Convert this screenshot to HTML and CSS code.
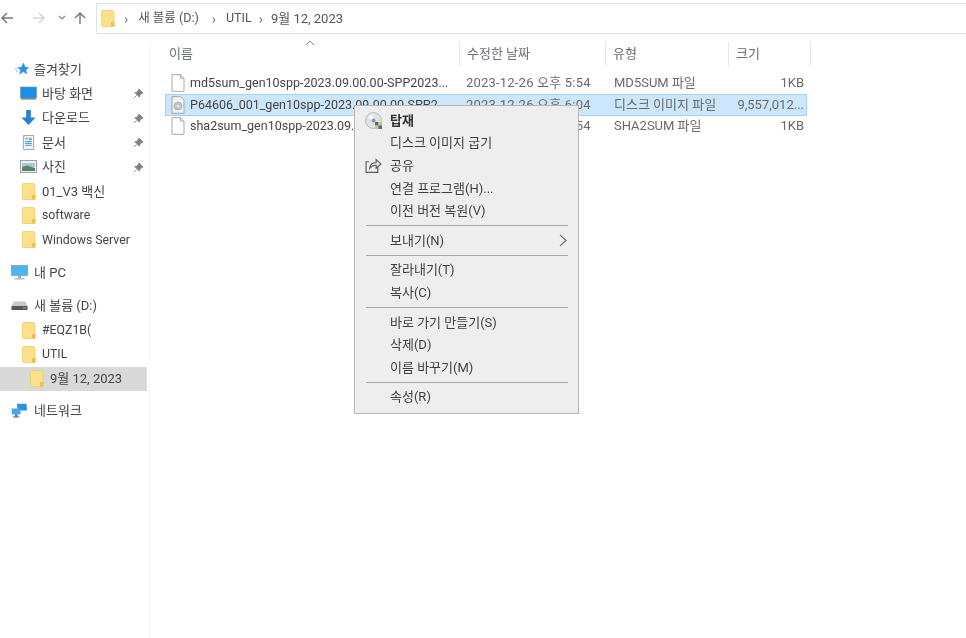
FILE: index.html
```html
<!DOCTYPE html>
<html lang="ko">
<head>
<meta charset="utf-8">
<title>9월 12, 2023</title>
<link rel="stylesheet" href="styles.css">
</head>
<body>
<svg class="defs" width="0" height="0" aria-hidden="true">
  <defs>
    <symbol id="folder" viewBox="0 0 14 17">
      <path d="M0.5 1.5 Q0.5 0.5 1.5 0.5 H11 Q13 0.5 13 2.5 V16.5 H1.5 Q0.5 16.5 0.5 15.5Z" fill="#fde08a" stroke="#eccb6b" stroke-width="0.8"/>
      <path d="M10 16.5 V12 H13.5 V16.5Z" fill="#eec14e"/>
    </symbol>
    <symbol id="pin" viewBox="0 0 12 12">
      <path d="M6.5 1 L11 5.5 L9.6 6 L7.4 8.2 L7 10 L2 5 L3.8 4.6 L6 2.4Z M4 8 L1 11" fill="#7d8288" stroke="#7d8288" stroke-width="0.9"/>
    </symbol>
    <symbol id="file" viewBox="0 0 14 18">
      <path d="M1 .7 H9.5 L13 4.2 V17.3 H1Z" fill="#fff" stroke="#a9a9a9" stroke-width="1"/>
      <path d="M9.5 .7 V4.2 H13" fill="#f1f1f1" stroke="#a9a9a9" stroke-width="1"/>
    </symbol>
  </defs>
</svg>
<div class="app">
  <header class="toolbar">
    <div class="nav">
      <svg class="nav-ico" width="14" height="14" viewBox="0 0 14 14"><path d="M13 7H2M7 2 2 7l5 5" fill="none" stroke="#7b7b7b" stroke-width="1.5"/></svg>
      <svg class="nav-ico" width="14" height="14" viewBox="0 0 14 14"><path d="M1 7h11M7 2l5 5-5 5" fill="none" stroke="#d5d5d5" stroke-width="1.5"/></svg>
      <svg class="nav-ico" width="8" height="6" viewBox="0 0 8 6"><path d="M1 1l3 3 3-3" fill="none" stroke="#8a8a8a" stroke-width="1.2"/></svg>
      <svg class="nav-ico" width="14" height="14" viewBox="0 0 14 14"><path d="M7 13V2M2 7l5-5 5 5" fill="none" stroke="#7b7b7b" stroke-width="1.5"/></svg>
    </div>
    <div class="address">
      <svg class="addr-folder"><use href="#folder"/></svg>
      <span class="chev">›</span><span>새 볼륨 (D:)</span>
      <span class="chev">›</span><span>UTIL</span>
      <span class="chev chev-last">›</span><span class="crumb-last">9월 12, 2023</span>
    </div>
  </header>

  <div class="main">
    <nav class="sidebar">
      <div class="item head first">
        <svg class="ico-s" viewBox="0 0 14 14"><path d="M8.5 1 10 5.2l3.6.2-2.8 2.500 1 3.900L8.300 9.600 4.700 12l1-3.900-3-2.500 3.800-.3z M1 9h2M0 6.500h2" fill="#2f8fe0" stroke="#2f8fe0" stroke-width=".6"/></svg>
        <span>즐겨찾기</span>
      </div>
      <div class="item sub">
        <svg class="ico-b" viewBox="0 0 17 14"><rect x=".5" y=".5" width="16" height="11" fill="#1a90e8" stroke="#6f8fa8" stroke-width=".6"/><rect x="1" y="11.6" width="15" height="1.5" fill="#74808a"/></svg>
        <span>바탕 화면</span>
        <svg class="pin"><use href="#pin"/></svg>
      </div>
      <div class="item sub">
        <svg class="ico-b" viewBox="0 0 17 16"><path d="M6 0h5v8h5l-7.500 8L1 8h5z" fill="#2d7fd3"/></svg>
        <span>다운로드</span>
        <svg class="pin"><use href="#pin"/></svg>
      </div>
      <div class="item sub">
        <svg class="ico-b" viewBox="0 0 17 16"><path d="M3 .5h11v15H3z" fill="#f3f5f7" stroke="#9aa2a8"/><path d="M5 4h3M5 7h7M5 9h7M5 11h7" stroke="#3d8fd0" stroke-width="1"/><path d="M9 3h3v2.500H9z" fill="#6cb0e0"/></svg>
        <span>문서</span>
        <svg class="pin"><use href="#pin"/></svg>
      </div>
      <div class="item sub">
        <svg class="ico-b" viewBox="0 0 17 13"><rect x=".5" y=".5" width="16" height="12" fill="#eef1f3" stroke="#9aa2a8"/><path d="M2 3h13v4H2z" fill="#a9c8e2"/><path d="M2 7l5-1.500L15 8v3H2z" fill="#5f7f62"/></svg>
        <span>사진</span>
        <svg class="pin"><use href="#pin"/></svg>
      </div>
      <div class="item sub"><svg class="ico-f"><use href="#folder"/></svg><span>01_V3 백신</span></div>
      <div class="item sub"><svg class="ico-f"><use href="#folder"/></svg><span class="lat">software</span></div>
      <div class="item sub"><svg class="ico-f"><use href="#folder"/></svg><span class="lat">Windows Server</span></div>

      <div class="item head group">
        <svg class="ico-m" viewBox="0 0 17 15"><rect x=".5" y=".5" width="16" height="10" fill="#4eb6ee" stroke="#7f95a5" stroke-width=".7"/><path d="M7 11h3v2H7zM3.500 13.200h10v1.300h-10z" fill="#9fb2bf"/></svg>
        <span>내 PC</span>
      </div>
      <div class="item head group">
        <svg class="ico-m" viewBox="0 0 17 10"><path d="M2.500 1h12L16.500 6H.5z" fill="#c7c9cb"/><rect x=".5" y="5.500" width="16" height="4" fill="#55595c"/><rect x="12" y="6.800" width="3" height="1.400" fill="#4fc24f"/></svg>
        <span>새 볼륨 (D:)</span>
      </div>
      <div class="item sub"><svg class="ico-f"><use href="#folder"/></svg><span class="lat">#EQZ1B(</span></div>
      <div class="item sub"><svg class="ico-f"><use href="#folder"/></svg><span class="lat">UTIL</span></div>
      <div class="item sub2 current"><svg class="ico-f"><use href="#folder"/></svg><span>9월 12, 2023</span></div>
      <div class="item head group net">
        <svg class="ico-m" viewBox="0 0 17 15"><path d="M6 .8h9.500L16 7.500H6.500z" fill="#2f8fdd"/><path d="M.8 5.500h8.700v6H.8z" fill="#45a6ea"/><path d="M4 11.500h2.500v2H4zM2 13.500h6.500v1H2z" fill="#5d6e7a"/></svg>
        <span>네트워크</span>
      </div>
    </nav>

    <section class="content">
      <div class="sort-mark"><svg width="10" height="6" viewBox="0 0 10 6"><path d="M1 5l4-4 4 4" fill="none" stroke="#8f8f8f" stroke-width="1"/></svg></div>
      <div class="columns">
        <div class="col col-name">이름</div>
        <div class="col col-date">수정한 날짜</div>
        <div class="col col-type">유형</div>
        <div class="col col-size">크기</div>
      </div>
      <div class="rows">
        <div class="row">
          <div class="cell name"><svg class="ico-file"><use href="#file"/></svg><span>md5sum_gen10spp-2023.09.00.00-SPP2023...</span></div>
          <div class="cell date">2023-12-26 오후 5:54</div>
          <div class="cell type">MD5SUM 파일</div>
          <div class="cell size">1KB</div>
        </div>
        <div class="row selected">
          <div class="cell name">
            <svg class="ico-file" viewBox="0 0 14 18"><path d="M1 .7H9.500L13 4.200V17.300H1Z" fill="#f2f2f2" stroke="#a3a3a3"/><circle cx="7" cy="10" r="4" fill="#c4c4c4" stroke="#a8a8a8" stroke-width=".7"/><circle cx="7" cy="10" r="1.200" fill="#eee"/></svg>
            <span>P64606_001_gen10spp-2023.09.00.00-SPP2...</span>
          </div>
          <div class="cell date">2023-12-26 오후 6:04</div>
          <div class="cell type">디스크 이미지 파일</div>
          <div class="cell size">9,557,012...</div>
        </div>
        <div class="row">
          <div class="cell name"><svg class="ico-file"><use href="#file"/></svg><span>sha2sum_gen10spp-2023.09.00.00-SPP2023...</span></div>
          <div class="cell date">2023-12-26 오후 5:54</div>
          <div class="cell type">SHA2SUM 파일</div>
          <div class="cell size">1KB</div>
        </div>
      </div>
    </section>
  </div>

  <div class="menu">
    <div class="mi strong">
      <svg class="mi-ico" viewBox="0 0 17 17"><circle cx="8.500" cy="8.500" r="8" fill="#dfe3e5" stroke="#a8adb0" stroke-width=".7"/><path d="M3 5a7 7 0 0 1 5-3l1 4-3 2z" fill="#f7f8f8"/><circle cx="8.500" cy="8.500" r="2" fill="#8b9499"/><path d="M10 10h3.500v3.500H10z" fill="#2b6fc9"/><path d="M13.500 10H17v3.500h-3.500z" fill="#f2c230"/><path d="M10 13.500h3.500V17H10z" fill="#f2c230"/><path d="M13.500 13.500H17V17h-3.500z" fill="#2b6fc9"/></svg>
      <span>탑재</span>
    </div>
    <div class="mi"><span>디스크 이미지 굽기</span></div>
    <div class="mi">
      <svg class="mi-ico" viewBox="0 0 16 15"><path d="M4 4H1v10h11V9" fill="none" stroke="#5d5d5d" stroke-width="1.100"/><path d="M4.500 10c.3-3.500 3-5.200 6-5.200V2L15 6l-4.500 4V7.300c-2.500 0-4.500.7-6 2.700z" fill="none" stroke="#5d5d5d" stroke-width="1.100"/></svg>
      <span>공유</span>
    </div>
    <div class="mi"><span>연결 프로그램(H)...</span></div>
    <div class="mi"><span>이전 버전 복원(V)</span></div>
    <div class="sep"></div>
    <div class="mi">
      <span>보내기(N)</span>
      <svg class="sub-arrow" width="8" height="13" viewBox="0 0 8 13"><path d="M1 .8l6 5.700-6 5.700" fill="none" stroke="#6a6a6a" stroke-width="1.100"/></svg>
    </div>
    <div class="sep"></div>
    <div class="mi"><span>잘라내기(T)</span></div>
    <div class="mi"><span>복사(C)</span></div>
    <div class="sep"></div>
    <div class="mi"><span>바로 가기 만들기(S)</span></div>
    <div class="mi"><span>삭제(D)</span></div>
    <div class="mi"><span>이름 바꾸기(M)</span></div>
    <div class="sep"></div>
    <div class="mi"><span>속성(R)</span></div>
  </div>
</div>
</body>
</html>
```

FILE: styles.css
```css
* { box-sizing: border-box; }
html, body { margin: 0; height: 100%; background: #fff; overflow: hidden; }
body { font: 13px/1 Roboto, "Noto Sans CJK KR", "Noto Sans", sans-serif; color: #444; }
.defs { position: absolute; }
.app { position: relative; width: 966px; height: 638px; display: flex; flex-direction: column; filter: blur(.45px); }

.toolbar { display: flex; height: 42px; padding-top: 3px; flex: none; }
.nav { width: 96px; height: 30px; display: flex; align-items: center; gap: 18px; flex: none; }
.nav-ico { flex: none; }
.nav-ico:nth-child(3) { margin: 0 -11px 0 -6px; }
.address { flex: 1; height: 31px; border: 1px solid #e2e2e2; border-right: 0; display: flex; align-items: center; padding-left: 4px; color: #555; font-size: 12.500px; }
.addr-folder { width: 14px; height: 17px; margin-right: -4px; }
.chev { color: #777; font-size: 14px; margin: 0 10px 0 13px; }
.chev-last { margin: 0 8px 0 7px; }
.crumb-last { font-size: 13px; }

.main { flex: 1; display: flex; min-height: 0; }
.sidebar { width: 150px; flex: none; border-right: 1px solid #f5f5f5; padding-top: 15px; display: flex; flex-direction: column; }
.item { height: 24.4px; display: flex; align-items: center; flex: none; white-space: nowrap; width: 147px; position: relative; }
.head { padding-left: 15px; gap: 6px; }
.sub { padding-left: 22px; gap: 6px; }
.sub2 { padding-left: 30px; gap: 6px; }
.group { margin-top: 8.500px; }
.net { margin-top: 7.500px; }
.current { background: #d9d9d9; }
.lat { font-size: 12.300px; }
.ico-s { width: 14px; height: 14px; flex: none; margin-right: -1px; }
.ico-b { width: 17px; height: 15px; margin-left: -2px; margin-right: -1px; flex: none; }
.ico-f { width: 14px; height: 17px; flex: none; }
.ico-m { width: 17px; height: 15px; margin-left: -4px; flex: none; }
.pin { position: absolute; left: 133px; top: 7px; width: 11px; height: 11px; }

.content { flex: 1; position: relative; padding-left: 15px; }
.sort-mark { position: absolute; left: 155px; top: -2px; line-height: 0; }
.columns { display: grid; grid-template-columns: 295px 146px 123px 82px; height: 24px; width: 646px; }
.col { border-right: 1px solid #e7e7e7; padding: 0 0 2px 7px; display: flex; align-items: center; color: #6a6f76; }
.col-name { padding-left: 4px; }
.rows { margin-top: 6.500px; width: 642px; }
.row { display: grid; grid-template-columns: 295px 147px 123px 77px; height: 21.600px; align-items: center; border: 1px solid transparent; }
.selected { background: #cce6fb; border-color: #a5d2f8; }
.cell { white-space: nowrap; color: #6a6a6a; padding-left: 5px; line-height: 20px; overflow: hidden; }
.date { letter-spacing: .2px; }
.type { padding-left: 6px; }
.name { color: #444; display: flex; align-items: center; gap: 5px; padding-left: 5px; font-size: 12.500px; }
.size { text-align: right; padding: 0 4px 0 0; }
.ico-file { width: 14px; height: 18px; flex: none; }

.menu { position: absolute; left: 354px; top: 105px; width: 225px; height: 309px; background: #eeeeee; border: 1px solid #b5b5b5; padding: 3px 10px 0 0; color: #3f3f3f; }
.mi { height: 22.600px; position: relative; padding-left: 35px; display: flex; align-items: center; white-space: nowrap; }
.strong { font-weight: 700; color: #333; }
.mi-ico { position: absolute; left: 10px; top: 3px; width: 17px; height: 17px; }
.sub-arrow { position: absolute; right: 1px; top: 5px; }
.sep { height: 1px; background: #a9a9a9; margin: 3.400px 0 2.600px 11px; }
```
